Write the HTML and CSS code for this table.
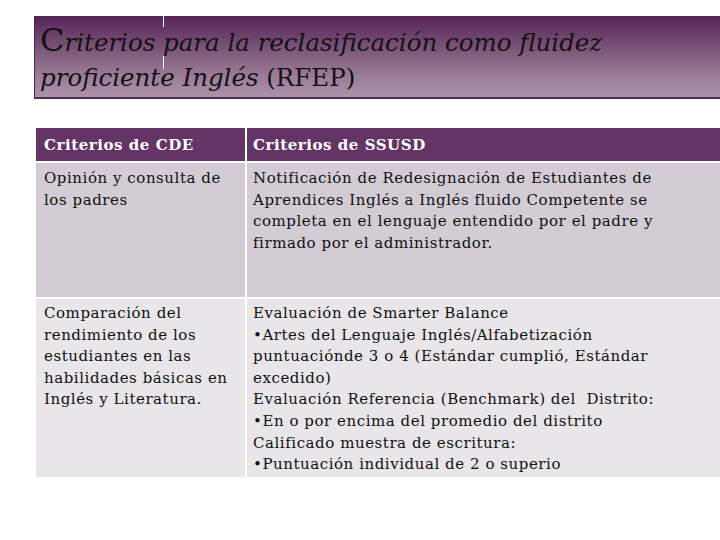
FILE: index.html
```html
<!DOCTYPE html>
<html>
<head>
<meta charset="utf-8">
<link rel="stylesheet" href="styles.css">
</head>
<body>
<div class="slide">
  <header class="title">
    <h1><span class="big">C</span><em>riterios para la reclasificación como fluidez<br>proficiente Inglés</em> (RFEP)</h1>
    <span class="tick t1"></span>
    <span class="tick t2"></span>
  </header>
  <div class="table">
    <div class="row head">
      <div class="c1">Criterios de CDE</div>
      <div class="c2">Criterios de SSUSD</div>
    </div>
    <div class="row r1">
      <div class="c1">Opinión y consulta de<br>los padres</div>
      <div class="c2">Notificación de Redesignación de Estudiantes de<br>Aprendices Inglés a Inglés fluido Competente se<br>completa en el lenguaje entendido por el padre y<br>firmado por el administrador.</div>
    </div>
    <div class="row r2">
      <div class="c1">Comparación del<br>rendimiento de los<br>estudiantes en las<br>habilidades básicas en<br>Inglés y Literatura.</div>
      <div class="c2">Evaluación de Smarter Balance<br>•Artes del Lenguaje Inglés/Alfabetización<br>puntuaciónde 3 o 4 (Estándar cumplió, Estándar<br>excedido)<br>Evaluación Referencia (Benchmark) del&nbsp; Distrito:<br>•En o por encima del promedio del distrito<br>Calificado muestra de escritura:<br>•Puntuación individual de 2 o superio</div>
    </div>
  </div>
</div>
</body>
</html>
```
FILE: styles.css
```css
html, body {
  margin: 0;
  padding: 0;
  background: #ffffff;
}
.slide {
  width: 720px;
  height: 540px;
  padding-top: 16px;
  box-sizing: border-box;
  font-family: "DejaVu Serif", "Liberation Serif", serif;
  color: #111;
  overflow: hidden;
}
.title {
  position: relative;
  margin-left: 34px;
  height: 83px;
  box-sizing: border-box;
  border-left: 1px solid #4a2a48;
  border-bottom: 2px solid #4a2f4a;
  background: linear-gradient(to bottom, #562457 0%, #7a5578 40%, #9c7d98 75%, #ad92aa 100%);
  padding: 7px 0 0 5px;
}
.title h1 {
  margin: 0;
  font-weight: normal;
  font-size: 24.5px;
  line-height: 35px;
  color: #141014;
  white-space: nowrap;
}
.title em {
  font-style: italic;
}
.title .big {
  font-size: 32px;
  font-style: normal;
}
.tick {
  position: absolute;
  left: 128px;
  width: 1px;
  background: #ffffff;
}
.t1 { top: 0; height: 11px; }
.t2 { top: 40px; height: 13px; }
.table {
  margin-left: 36px;
  margin-top: 29px;
  font-size: 15px;
  letter-spacing: 0.55px;
  line-height: 21.6px;
  white-space: nowrap;
}
.row {
  display: grid;
  grid-template-columns: 209px 1fr;
  column-gap: 2px;
  margin-bottom: 2px;
}
.row > div {
  padding-left: 8px;
  overflow: hidden;
  box-sizing: border-box;
}
.row > .c2 {
  padding-left: 6px;
}
.head > div {
  background: #633466;
  color: #ffffff;
  font-weight: bold;
  height: 33px;
  padding-top: 7px;
}
.r1 > div {
  background: #d3ccd4;
  height: 134px;
  padding-top: 5px;
}
.r2 > div {
  background: #e8e6e9;
  height: 178px;
  padding-top: 4px;
}
```
